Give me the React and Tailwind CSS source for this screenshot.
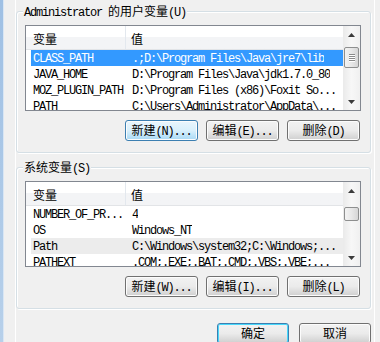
import React from 'react';

const userRows = [
  { name: 'CLASS_PATH', value: '.;D:\\Program Files\\Java\\jre7\\lib', state: 'active' },
  { name: 'JAVA_HOME', value: 'D:\\Program Files\\Java\\jdk1.7.0_80' },
  { name: 'MOZ_PLUGIN_PATH', value: 'D:\\Program Files (x86)\\Foxit So...' },
  { name: 'PATH', value: 'C:\\Users\\Administrator\\AppData\\...' },
];

const systemRows = [
  { name: 'NUMBER_OF_PR...', value: '4' },
  { name: 'OS', value: 'Windows_NT' },
  { name: 'Path', value: 'C:\\Windows\\system32;C:\\Windows;...', state: 'inactive' },
  { name: 'PATHEXT', value: '.COM;.EXE;.BAT;.CMD;.VBS;.VBE;...' },
];

// CJK runs get their own font and size so the ASCII keeps its 6px cells
function Txt({ s }) {
  const parts = s.split(/([\u4e00-\u9fff]+)/);
  return parts.map((part, i) =>
    i % 2 ? (
      <span key={i} className="font-['Noto_Sans_CJK_SC',sans-serif] text-[12px] tracking-normal">
        {part}
      </span>
    ) : (
      <React.Fragment key={i}>{part}</React.Fragment>
    ),
  );
}

function Arrow({ down }) {
  return (
    <svg width="7" height="4" viewBox="0 0 7 4">
      <path d={down ? 'M0 0h7L3.5 4z' : 'M0 4h7L3.5 0z'} fill="#3b3b3b" />
    </svg>
  );
}

function ScrollBar({ thumbTop, thumbHeight, grip }) {
  return (
    <div className="w-[17px] shrink-0 flex flex-col bg-gradient-to-r from-[#eaeaea] via-[#f7f7f7] to-[#f0f0f0]">
      <div className="h-[17px] shrink-0 flex items-center justify-center">
        <Arrow />
      </div>
      <div className="flex-1 relative px-[1px]">
        <div
          className="rounded-[2px] border border-[#8e8f8f] bg-gradient-to-r from-[#f3f3f3] via-[#e8e8e8] to-[#d6d6d6] flex flex-col items-center justify-center gap-[1px]"
          style={{ marginTop: thumbTop, height: thumbHeight }}
        >
          {grip &&
            [0, 1, 2, 3].map((n) => (
              <div key={n} className="w-[6px] h-[1px] bg-[#8a8a8a] shadow-[0_1px_0_#fff]" />
            ))}
        </div>
      </div>
      <div className="h-[17px] shrink-0 flex items-center justify-center">
        <Arrow down />
      </div>
    </div>
  );
}

function VarList({ rows, thumbTop, thumbHeight, grip }) {
  return (
    <div className="h-[86px] border border-[#828790] bg-white flex overflow-hidden">
      <div className="flex-1 min-w-0 flex flex-col">
        <div className="h-[24px] shrink-0 flex border-b border-[#e2e4e7] bg-gradient-to-b from-white from-50% to-[#f3f4f6] to-50%">
          <div className="w-[100px] pl-[7px] pt-[2px] border-r border-[#e3e8ee] flex items-center">
            <Txt s="变量" />
          </div>
          <div className="pl-[5px] pt-[2px] flex items-center">
            <Txt s="值" />
          </div>
        </div>
        {rows.map((row) => (
          <div key={row.name} className="h-[16px] shrink-0 pl-[5px] flex">
            <div
              className={
                row.state === 'active'
                  ? 'flex-1 flex bg-[#3399ff] text-white'
                  : row.state === 'inactive'
                    ? 'flex-1 flex bg-[#ececec]'
                    : 'flex-1 flex'
              }
            >
              <div className="w-[95px] shrink-0 pl-[2px] pt-[1px] whitespace-nowrap overflow-hidden">{row.name}</div>
              <div className="pl-[6px] pt-[1px] whitespace-nowrap overflow-hidden">{row.value}</div>
            </div>
          </div>
        ))}
      </div>
      <ScrollBar thumbTop={thumbTop} thumbHeight={thumbHeight} grip={grip} />
    </div>
  );
}

function Button({ label, focused, isDefault, width = 'w-[73px]' }) {
  let tone =
    'border-[#707070] bg-gradient-to-b from-[#f2f2f2] from-0% via-[#ebebeb] via-50% to-[#cfcfcf] shadow-[inset_0_0_0_1px_#fcfcfc]';
  if (focused) {
    tone =
      'border-[#3c7fb1] bg-gradient-to-b from-[#eaf6fd] via-[#d9f0fc] via-50% to-[#a7d9f5] shadow-[inset_0_0_0_1px_#fcfcfc]';
  }
  if (isDefault) {
    tone =
      'border-[#3c7fb1] bg-gradient-to-b from-[#f2f2f2] via-[#ebebeb] via-50% to-[#cfcfcf] shadow-[inset_0_0_0_1px_#48d8fb]';
  }
  return (
    <div className={`${width} h-[21px] shrink-0 rounded-[3px] border flex items-center justify-center ${tone}`}>
      <span className="pt-[1px]">
        <Txt s={label} />
      </span>
    </div>
  );
}

function GroupBox({ legend, children, className }) {
  return (
    <div
      className={`relative w-[355px] border border-[#d5dfe5] rounded-[3px] shadow-[1px_1px_0_#fff,inset_1px_1px_0_#fff] pt-[13px] pl-[8px] pr-[9px] pb-[11px] ${className}`}
    >
      <div className="absolute left-[6px] top-[-9px] px-[1px] bg-[#f0f0f0] leading-[16px] whitespace-nowrap">
        <Txt s={legend} />
      </div>
      {children}
    </div>
  );
}

export default function App() {
  return (
    <div className="w-[380px] h-[342px] overflow-hidden bg-[#f0f0f0] flex text-black font-['Liberation_Mono','Noto_Sans_CJK_SC',monospace] text-[12px] leading-[16px] tracking-[-1.2px]">
      <div className="w-[3px] shrink-0 bg-gradient-to-b from-[#9fc0e4] to-[#b7d0ea]" />
      <div className="w-[1px] shrink-0 bg-[#d9e6f4]" />
      <div className="w-[11px] shrink-0" />
      <div className="w-[360px] shrink-0 border-l border-r border-white flex flex-col">
        <GroupBox legend="Administrator 的用户变量(U)" className="mt-[11px]">
          <VarList rows={userRows} thumbTop={4} thumbHeight={21} grip />
          <div className="mt-[9px] pr-[1px] flex justify-end gap-[8px]">
            <Button label="新建(N)..." focused />
            <Button label="编辑(E)..." />
            <Button label="删除(D)" />
          </div>
        </GroupBox>

        <GroupBox legend="系统变量(S)" className="mt-[14px]">
          <VarList rows={systemRows} thumbTop={8} thumbHeight={14} />
          <div className="mt-[9px] pr-[1px] flex justify-end gap-[8px]">
            <Button label="新建(W)..." />
            <Button label="编辑(I)..." />
            <Button label="删除(L)" />
          </div>
        </GroupBox>

        <div className="w-[355px] mt-[14px] flex justify-end gap-[10px]">
          <Button label="确定" isDefault width="w-[72px]" />
          <Button label="取消" width="w-[72px]" />
        </div>
      </div>
    </div>
  );
}
